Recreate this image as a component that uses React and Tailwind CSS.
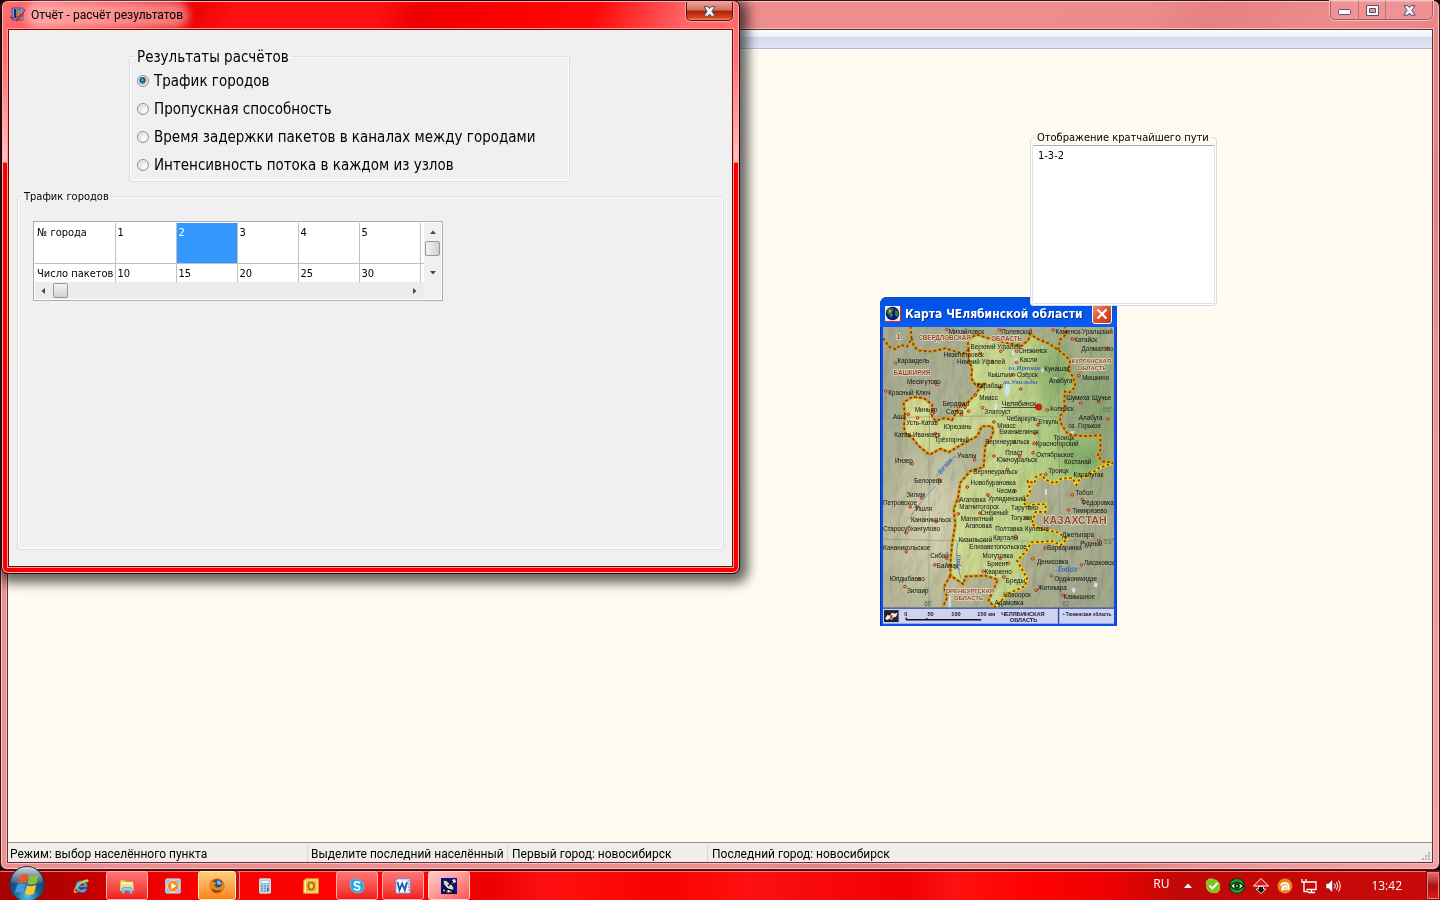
import React from 'react';
import clsx from 'clsx';

const REPORTS = [
  'Трафик городов',
  'Пропускная способность',
  'Время задержки пакетов в каналах между городами',
  'Интенсивность потока в каждом из узлов',
];

const CITIES = [
  { id: '1', packets: '10' },
  { id: '2', packets: '15' },
  { id: '3', packets: '20' },
  { id: '4', packets: '25' },
  { id: '5', packets: '30' },
];

// [x, y, name] in map units, text starts at the point
const TOWNS = [
  [240, 131, 'Михайловск'], [398, 131, 'Полевской'], [562, 131, 'Каменск-Уральский'],
  [618, 157, 'Катайск'], [640, 184, 'Долматово'], [86, 220, 'Караидель'],
  [225, 200, 'Нязепетровск'], [265, 222, 'Нижний Уфалей'], [306, 176, 'Верхний Уфалей'],
  [450, 190, 'Снежинск'], [454, 216, 'Касли'], [528, 245, 'Кунашак'],
  [358, 261, 'Кыштым'], [446, 262, 'Озёрск'], [542, 280, 'Алабуга'],
  [324, 294, 'Карабаш'], [114, 283, 'Месягутово'], [58, 316, 'Красный Ключ'],
  [332, 332, 'Миасс'], [222, 350, 'Бердяуш'], [232, 374, 'Сатка'],
  [138, 368, 'Миньяр'], [72, 388, 'Аша'], [112, 406, 'Усть-Катав'],
  [225, 419, 'Юрюзань'], [76, 442, 'Катав-Ивановск'], [198, 458, 'Трёхгорный'],
  [348, 372, 'Златоуст'], [546, 364, 'Копейск'], [414, 394, 'Чебаркуль'],
  [386, 414, 'Миасс'], [392, 434, 'Еманжелинск'], [510, 402, 'Еткуль'],
  [556, 450, 'Троицк'], [502, 470, 'Красногорский'], [350, 464, 'Верхнеуральск'],
  [594, 332, 'Шумиха'], [672, 332, 'Щучье'], [642, 272, 'Мишкино'],
  [632, 392, 'Алабуга'], [600, 416, 'оз. Горькое'], [266, 506, 'Учалы'],
  [410, 497, 'Пласт'], [504, 502, 'Октябрьское'], [384, 519, 'Южноуральск'],
  [78, 520, 'Инзер'], [588, 524, 'Костанай'], [540, 550, 'Троицк'],
  [616, 564, 'Карабутак'], [314, 553, 'Верхнеуральск'], [136, 582, 'Белорецк'],
  [306, 588, 'Новобурановка'], [384, 610, 'Чесма'], [358, 634, 'Урлядинский'],
  [622, 616, 'Тобол'], [640, 646, 'Фёдоровка'], [612, 672, 'Тимирязево'],
  [112, 622, 'Зилим'], [42, 646, 'Петровское'], [140, 666, 'Ишля'],
  [272, 638, 'Агаповка'], [272, 658, 'Магнитогорск'], [336, 678, 'Снежный'],
  [428, 662, 'Тарутино'], [426, 692, 'Тогузак'], [276, 697, 'Магнитный'],
  [126, 698, 'Кананикольск'], [42, 726, 'Старосубхангулово'], [290, 717, 'Агаповка'],
  [380, 726, 'Полтавка'], [470, 726, 'Кулевчи'], [582, 744, 'Джетыгара'],
  [636, 772, 'Рудный'], [270, 758, 'Кизильский'], [374, 752, 'Карталы'],
  [302, 780, 'Елизаветопольское'], [42, 782, 'Кананикольское'], [536, 782, 'Варваринка'],
  [342, 806, 'Могутовка'], [356, 832, 'Бриент'], [348, 854, 'Кваркено'],
  [184, 808, 'Сибай'], [204, 838, 'Баймак'], [506, 824, 'Денисовка'],
  [648, 828, 'Лисаковск'], [412, 882, 'Бреды'], [558, 876, 'Орджоникидзе'],
  [62, 876, 'Юлдыбаево'], [114, 912, 'Зилаир'], [508, 904, 'Житикара'],
  [404, 926, 'Новоорск'], [586, 932, 'Камышное'], [378, 949, 'Адамовка'],
];

const DOTS = [
  [235, 118], [393, 120], [555, 120], [612, 147], [716, 175], [80, 220], [335, 190],
  [397, 184], [444, 184], [372, 215], [444, 218], [436, 255], [204, 284], [50, 304],
  [394, 294], [320, 316], [457, 298], [289, 353], [300, 365], [146, 385], [190, 372],
  [278, 375], [118, 374], [342, 354], [537, 361], [376, 397], [509, 406], [500, 431],
  [200, 432], [437, 458], [497, 462], [720, 388], [638, 340], [692, 336], [632, 258],
  [376, 500], [454, 500], [494, 490], [318, 511], [130, 523], [211, 572], [158, 626],
  [124, 653], [143, 653], [202, 697], [112, 731], [112, 788], [234, 808], [198, 828],
  [296, 593], [358, 617], [417, 540], [440, 605], [532, 555], [612, 617], [642, 630],
  [601, 662], [269, 674], [334, 672], [474, 687], [442, 742], [692, 755], [530, 777],
  [395, 808], [420, 823], [344, 847], [493, 809], [640, 828], [406, 864], [550, 861],
  [503, 904], [583, 919], [150, 871], [108, 893], [270, 634],
];

const REGION =
  'M300 180L298 160L308 142L325 134L360 145L395 155L430 162L460 168L480 150L485 132L510 148L540 160L570 180L595 200L606 215L600 240L615 262L622 290L605 308L590 305L588 335L590 360L574 382L580 405L600 435L650 440L697 437L697 480L688 500L705 516L735 520L690 537L660 560L640 560L625 587L612 566L580 568L560 582L530 570L520 555L503 562L498 582L478 575L486 605L465 640L478 652L500 645L532 645L532 668L502 668L490 705L522 722L570 730L596 750L578 768L550 756L490 760L470 790L446 815L460 840L476 868L470 892L420 914L400 934L378 955L360 935L374 905L388 872L350 860L290 863L284 886L245 860L245 825L250 765L260 705L255 660L268 625L275 580L305 545L345 533L350 470L365 450L375 425L370 410L340 410L326 440L280 465L240 488L215 478L182 496L150 470L130 445L108 430L105 410L108 375L104 338L130 322L165 325L190 345L190 380L200 394L230 385L250 392L262 368L275 348L296 340L318 316L330 300L348 282L320 285L308 265L310 235L300 210Z';

const BORDERS = [
  'M42 145L60 170L80 178L95 165L115 170L128 145L125 111',
  'M128 145L135 170L150 182L190 185L230 175L260 185L285 190L300 180',
  'M570 180L575 150L595 132L590 111',
  'M245 860L225 895L236 925L222 955',
];

const GOLD =
  'M735 520L690 537L660 560L640 560L625 587L612 566L580 568L560 582L530 570L520 555L503 562L498 582L478 575L486 605L465 640L478 652L500 645L532 645L532 668L502 668L490 705L522 722L570 730L596 750L578 768L550 756L490 760L470 790L446 815L460 840L476 868L470 892L420 914L400 934L378 955';

function RegionMap() {
  return (
    <svg viewBox="42 111 696 894" className="block w-full" role="img" aria-label="Карта Челябинской области">
      <defs>
        <linearGradient id="land" x1="0" x2="1" y1="0" y2="1">
          <stop offset="0" stopColor="#a6ac90" />
          <stop offset="0.5" stopColor="#b9bb99" />
          <stop offset="1" stopColor="#a2a98a" />
        </linearGradient>
        <linearGradient id="region" x1="0" x2="1">
          <stop offset="0" stopColor="#dbe098" />
          <stop offset="0.5" stopColor="#c8da90" />
          <stop offset="0.8" stopColor="#a8c97e" />
          <stop offset="1" stopColor="#98bd76" />
        </linearGradient>
        <radialGradient id="woods">
          <stop offset="0" stopColor="#6e9a5c" stopOpacity="0.6" />
          <stop offset="1" stopColor="#6e9a5c" stopOpacity="0" />
        </radialGradient>
        <radialGradient id="hills">
          <stop offset="0" stopColor="#dedcb8" stopOpacity="0.9" />
          <stop offset="1" stopColor="#dedcb8" stopOpacity="0" />
        </radialGradient>
        <filter id="relief" x="0" y="0" width="1" height="1">
          <feTurbulence type="fractalNoise" baseFrequency="0.022 0.012" numOctaves="4" seed="7" />
          <feDiffuseLighting surfaceScale="11" lightingColor="#fff">
            <feDistantLight azimuth="215" elevation="50" />
          </feDiffuseLighting>
        </filter>
      </defs>

      <rect x="42" y="111" width="696" height="850" fill="url(#land)" />
      <ellipse cx="690" cy="350" rx="180" ry="330" fill="url(#woods)" />
      <ellipse cx="190" cy="700" rx="170" ry="300" fill="url(#hills)" />
      <path d={REGION} fill="url(#region)" />
      <ellipse cx="560" cy="250" rx="80" ry="170" fill="url(#woods)" />
      <ellipse cx="640" cy="500" rx="90" ry="70" fill="url(#woods)" />
      <rect x="42" y="111" width="696" height="850" filter="url(#relief)" className="opacity-30 mix-blend-multiply" />

      <g fill="none" stroke="#8f9386" strokeWidth="2">
        <path d="M42 385Q400 372 738 388M42 750Q400 762 738 752M182 270L180 955M570 111L576 955" />
      </g>
      <g fill="none" stroke="#6f8fc4" strokeWidth="3">
        <path d="M205 560Q225 520 262 500M120 690Q150 640 200 590M268 760Q258 800 272 850L278 870M540 855Q580 830 640 838" />
      </g>
      <g fill="#cfe0f0">
        <path d="M432 180l8 4-3 14-8-3zM438 205l9 2 2 16-10 3zM430 228l10 4-6 12-8-4zM412 282l14 4-2 20-9 16-8-12zM380 340l8 4-4 20-7-4zM520 235l8 4-3 10-6-3zM556 262l12 3-6 8zM518 168l8 2-3 8zM400 350l8-6 3 12-8 6zM608 424l12 2-4 8-9-2zM530 598l7 2-1 10-7-2zM530 608l6 1-1 8-6-2zM680 880l10 4-4 12-10-3zM610 900l10-3 2 12-8 3zM240 920l6 0 0 40-6 0z" />
      </g>

      <path d={REGION} fill="none" stroke="#e39a22" strokeWidth="9" strokeLinejoin="round" />
      {BORDERS.map((d) => (
        <path key={d} d={d} fill="none" stroke="#e39a22" strokeWidth="8" />
      ))}
      <path d={GOLD} fill="none" stroke="#f2d326" strokeWidth="9" strokeLinejoin="round" />
      <g fill="none" stroke="#6a4512" strokeWidth="5" strokeDasharray="8 7">
        <path d={REGION} />
        {BORDERS.map((d) => (
          <path key={d} d={d} />
        ))}
      </g>

      <g fill="#f0b24a" stroke="#b02a12" strokeWidth="3">
        {DOTS.map(([x, y]) => (
          <circle key={`${x}-${y}`} cx={x} cy={y} r="4" />
        ))}
      </g>
      <circle cx="511" cy="352" r="11" fill="#c22315" stroke="#f4c04a" strokeWidth="2" strokeDasharray="3 3" />

      <g className="font-['Liberation_Sans']" fontSize="19" fill="#111">
        {TOWNS.map(([x, y, name]) => (
          <text key={`${x}-${y}`} x={x} y={y}>{name}</text>
        ))}
        <text x="400" y="349" fontSize="21" className="underline">Челябинск</text>
      </g>
      <g className="font-['Liberation_Sans'] font-bold" fill="#8c4a34" stroke="#e6dcc0" strokeWidth="4" paintOrder="stroke">
        <text x="82" y="148" fontSize="24">1</text>
        <text x="148" y="151" fontSize="19">СВЕРДЛОВСКАЯ</text>
        <text x="368" y="153" fontSize="19">ОБЛАСТЬ</text>
        <text x="74" y="256" fontSize="19">БАШКИРИЯ</text>
        <text x="610" y="220" fontSize="18">КУРГАНСКАЯ</text>
        <text x="628" y="240" fontSize="18">ОБЛАСТЬ</text>
        <text x="524" y="704" fontSize="32">КАЗАХСТАН</text>
        <text x="230" y="914" fontSize="18">ОРЕНБУРГСКАЯ</text>
        <text x="256" y="935" fontSize="18">ОБЛАСТЬ</text>
      </g>
      <g className="font-['Liberation_Serif'] italic font-bold" fill="#3f68b0">
        <text x="420" y="242" fontSize="21">оз.Иртяш</text>
        <text x="404" y="283" fontSize="21">оз.Увильды</text>
        <text x="566" y="849" fontSize="24">Тобол</text>
        <text x="216" y="556" fontSize="22" transform="rotate(-50 216 556)">Белая</text>
        <text x="272" y="845" fontSize="22" transform="rotate(-85 272 845)">Урал</text>
      </g>
      <g className="font-['Liberation_Sans']" fontSize="20" fill="#5c6353">
        <text x="704" y="368">55°</text>
        <text x="708" y="766">53°</text>
        <text x="166" y="953">60</text>
        <text x="582" y="953">62</text>
      </g>

      <rect x="42" y="957" width="696" height="48" fill="#cdd3f0" />
      <path d="M42 958H738M571 958V1005" stroke="#33478f" strokeWidth="4" />
      <rect x="45" y="964" width="44" height="36" fill="#23222b" />
      <path d="M48 990l8-12 7 3 6-9 9 3 8-4-4 12-9 3-4 8-8-4-5 4z" fill="#f4f1ec" />
      <path d="M62 988l4-10 6 2-3 12z" fill="#d23325" />
      <path d="M112 993H338M112 986V994M174 988V994" stroke="#111" strokeWidth="4" />
      <g className="font-['Liberation_Sans'] font-bold" fontSize="17" fill="#16182c">
        <text x="106" y="983">0</text>
        <text x="176" y="983">50</text>
        <text x="248" y="983">100</text>
        <text x="326" y="983">150 км</text>
        <text x="398" y="981">ЧЕЛЯБИНСКАЯ</text>
        <text x="424" y="999">ОБЛАСТЬ</text>
        <text x="584" y="983" fontSize="14">• Тюменская область</text>
      </g>
    </svg>
  );
}

function CloseGlyph({ className }) {
  return (
    <svg viewBox="0 0 13 11" className={clsx('h-[11px] w-[13px]', className)} aria-hidden="true">
      <path
        d="M1 .7h4L6.500 2.600 8 .7h4L8.900 5.300l3.300 4.900H8L6.500 8 5 10.200H.8l3.300-4.900z"
        fill="#f6f6f6"
        stroke="#4c5168"
        strokeWidth="1"
      />
    </svg>
  );
}

function MainTitleBar() {
  return (
    <header className="flex h-[28px] shrink-0 justify-end">
      <div className="flex h-[19px] overflow-hidden rounded-b-[5px] border border-t-0 border-[#a35c60] bg-[#f09a9d]/60 shadow-[0_0_0_1px_#f8c0c0]">
        <button type="button" aria-label="Свернуть" className="flex w-[28px] items-center justify-center border-r border-[#b96f73]">
          <svg viewBox="0 0 13 6" className="mt-1 h-[6px] w-[13px]" aria-hidden="true">
            <rect x=".5" y=".5" width="12" height="5" rx="1" fill="#fafafa" stroke="#5b5368" />
          </svg>
        </button>
        <button type="button" aria-label="Развернуть" className="flex w-[27px] items-center justify-center border-r border-[#b96f73]">
          <svg viewBox="0 0 13 11" className="h-[11px] w-[13px]" aria-hidden="true">
            <path d="M.5 .5h12v10H.5zM3.500 3.500v4h6v-4z" fill="#fafafa" fillRule="evenodd" stroke="#5b5368" />
          </svg>
        </button>
        <button type="button" aria-label="Закрыть" className="flex w-[46px] items-center justify-center">
          <CloseGlyph />
        </button>
      </div>
    </header>
  );
}

function GroupBox({ title, className, legendClass, children }) {
  return (
    <fieldset className={clsx('min-w-0 rounded-[3px] border border-[#d5dfe5] shadow-[inset_0_0_0_1px_#fff]', className)}>
      <legend className={legendClass}>{title}</legend>
      {children}
    </fieldset>
  );
}

function ShortestPath() {
  return (
    <div className="absolute top-[80px] left-[1022px] w-[187px]">
      <fieldset className="rounded-[4px] border border-[#d3dde6] bg-[#fffbf0] shadow-[inset_0_0_0_1px_#fff]">
        <legend className="ml-[4px] bg-[#fffbf0] px-[2px] pt-[2px] text-[11px] leading-[14px]">
          <label htmlFor="path">Отображение кратчайшего пути</label>
        </legend>
        <textarea
          id="path"
          readOnly
          defaultValue="1-3-2"
          className="mx-px mb-px block h-[159px] w-[183px] resize-none rounded-[2px] border border-[#e2e3ea] border-t-[#abadb3] bg-white px-[5px] py-[3px] text-[11px] leading-[14px] outline-none"
        />
      </fieldset>
    </div>
  );
}

function MapWindow() {
  return (
    <section className="absolute top-[248px] left-[872px] w-[237px] rounded-t-[7px] bg-[#0a4fe6] px-[3px] pb-[2px] shadow-[inset_1px_0_0_#0a2fb4,inset_-1px_0_0_#0a3bd0]">
      <header className="-mx-[3px] flex h-[30px] items-center gap-[4px] rounded-t-[7px] bg-linear-to-b from-[#0a50d8] via-[#0054e9] via-30% to-[#0a5cf5] px-[5px] pt-[4px]">
        <svg viewBox="0 0 16 16" className="h-[16px] w-[16px]" aria-hidden="true">
          <rect width="16" height="16" fill="#f4e9e2" />
          <path d="M0 15.500h16M15.500 0v16" stroke="#e02a1c" />
          <circle cx="7.500" cy="7.500" r="6.800" fill="#0b1a78" />
          <path d="M3 3l4-1 2 2-2 2 1 3-2 3-2-3-2-2zM10 4l3 1 1 3-2 3-2-2z" fill="#3c7a3a" />
          <path d="M4 4l2 0 0 2-2 1z" fill="#b9b04a" />
        </svg>
        <h2 className="flex-1 text-[12px] leading-[16px] font-bold whitespace-nowrap text-white [text-shadow:1px_1px_0_#0a2a86]">
          Карта ЧЕлябинской области
        </h2>
        <button
          type="button"
          aria-label="Закрыть карту"
          className="flex h-[20px] w-[20px] items-center justify-center rounded-[3px] border border-white bg-linear-to-br from-[#f0906f] via-[#e0502c] to-[#c23a14]"
        >
          <svg viewBox="0 0 12 12" className="h-[12px] w-[12px]" aria-hidden="true">
            <path d="M1.500 1.500l9 9M10.500 1.500l-9 9" stroke="#fff" strokeWidth="2.200" />
          </svg>
        </button>
      </header>
      <RegionMap />
    </section>
  );
}

function ResultChoice() {
  return (
    <GroupBox
      title="Результаты расчётов"
      className="ml-[112px] h-[137px] w-[441px] text-[15px]"
      legendClass="ml-[5px] px-[2px] pt-[2px] leading-[20px]"
    >
      <div className="flex flex-col gap-[8px] pt-[4px] pl-[7px]">
        {REPORTS.map((name, idx) => (
          <label key={name} className="flex items-center gap-[5px] leading-[20px] whitespace-nowrap">
            <input
              type="radio"
              name="report"
              defaultChecked={idx === 0}
              className="h-[12px] w-[12px] appearance-none rounded-full border border-[#8e8f8f] bg-radial-[at_65%_65%] from-white to-[#c9ced3] shadow-[inset_0_0_0_1px_#f4f4f4] checked:bg-radial-[at_45%_40%] checked:from-[#7fd0ee] checked:from-0% checked:via-[#0f4a75] checked:via-25% checked:to-[#e4eaee] checked:to-60%"
            />
            {name}
          </label>
        ))}
      </div>
    </GroupBox>
  );
}

function Arrow({ dir, className }) {
  const paths = {
    up: 'M1 6L4 2.500L7 6Z',
    down: 'M1 2L4 5.500L7 2Z',
    left: 'M6 1L2.500 4L6 7Z',
    right: 'M2 1L5.500 4L2 7Z',
  };
  return (
    <svg viewBox="0 0 8 8" className={clsx('h-[8px] w-[8px]', className)} aria-hidden="true">
      <path d={paths[dir]} fill="#44474c" />
    </svg>
  );
}

function TrafficTable() {
  return (
    <div className="grid h-[80px] w-[410px] grid-cols-[1fr_17px] grid-rows-[1fr_17px] border border-[#abadb3] bg-white p-px">
      <div className="overflow-hidden">
        <table className="w-[447px] table-fixed border-collapse text-left text-[11px] leading-[14px]">
          <colgroup>
            <col className="w-[80px]" />
            <col className="w-[61px]" />
            <col className="w-[61px]" />
            <col className="w-[61px]" />
            <col className="w-[61px]" />
            <col className="w-[61px]" />
            <col className="w-[62px]" />
          </colgroup>
          <tbody>
            <tr className="h-[40px] align-top">
              <th scope="row" className="border-r border-b border-[#c0c0c0] pt-[3px] pl-[2px] font-normal whitespace-nowrap">№ города</th>
              {CITIES.map((city) => (
                <td
                  key={city.id}
                  className={clsx(
                    'border-r border-b border-[#c0c0c0] pt-[3px] pl-[2px]',
                    city.id === '2' && 'bg-[#3399ff] text-white',
                  )}
                >
                  {city.id}
                </td>
              ))}
              <td className="border-b border-[#c0c0c0]" />
            </tr>
            <tr className="h-[40px] align-top">
              <th scope="row" className="border-r border-[#c0c0c0] pt-[3px] pl-[2px] font-normal whitespace-nowrap">Число пакетов</th>
              {CITIES.map((city) => (
                <td key={city.id} className="border-r border-[#c0c0c0] pt-[3px] pl-[2px]">{city.packets}</td>
              ))}
              <td />
            </tr>
          </tbody>
        </table>
      </div>
      <div className="flex flex-col items-center bg-[#f0f0f0]">
        <Arrow dir="up" className="mt-[5px]" />
        <span className="mt-[5px] h-[15px] w-[15px] rounded-[2px] border border-[#979797] bg-linear-to-r from-[#f4f4f4] to-[#cfd0d3]" />
        <Arrow dir="down" className="mt-auto mb-[5px]" />
      </div>
      <div className="flex items-center bg-[#ececec]">
        <Arrow dir="left" className="ml-[4px]" />
        <span className="ml-[6px] h-[15px] w-[15px] rounded-[2px] border border-[#979797] bg-linear-to-b from-[#f4f4f4] to-[#cfd0d3]" />
        <Arrow dir="right" className="mr-[5px] ml-auto" />
      </div>
      <div className="bg-[#f0f0f0]" />
    </div>
  );
}

function ReportWindow() {
  return (
    <section className="absolute top-0 left-[1px] flex h-[574px] w-[739px] flex-col rounded-[7px] border border-[#2c0006] bg-[#ff0a0a] bg-[linear-gradient(#ff6a6a,#ff7070_60px,#ffc4c4_161px,#ff0000_162px,#f80000)] px-[6px] pb-[6px] shadow-[3px_4px_12px_5px_rgba(0,0,0,0.6),inset_0_0_0_1px_#ffb4b4]">
      <header className="-mx-[5px] mt-px flex h-[27px] shrink-0 items-start justify-between rounded-t-[6px] bg-[linear-gradient(110deg,#ff7070_0,#fb3a3a_14%,#e80000_25%,#ff0f0f_31%,#ff1010_51%,#ee0000_56%,#ff0000_70%,#ff0808_80%,#ff6a6a_93%)] pr-[5px] pl-[7px]">
        <div className="flex items-center gap-[5px] pt-[5px]">
          <svg viewBox="0 0 16 16" className="h-[16px] w-[16px]" aria-hidden="true">
            <path d="M2 1h11v12H2z" fill="#7f9dee" stroke="#27408f" strokeWidth=".8" />
            <path d="M4 2h2v9H4z" fill="#1e2c5c" />
            <path d="M7 3l3-1v10l-3 1z" fill="#c99b3b" stroke="#4a3410" strokeWidth=".6" />
            <path d="M0 10c5 3 12-1 15.500-8M15 2l-3 7-6 5" fill="none" stroke="#b31530" strokeWidth="1.100" />
          </svg>
          <h1 className="rounded-full bg-white/45 font-['Roboto'] text-[12px] leading-[16px] whitespace-nowrap shadow-[0_0_8px_6px_rgba(255,255,255,0.45)]">
            Отчёт - расчёт результатов
          </h1>
        </div>
        <button
          type="button"
          aria-label="Закрыть отчёт"
          className="flex h-[19px] w-[47px] items-center justify-center rounded-b-[5px] border border-t-0 border-[#57120c] bg-[linear-gradient(#e9a596,#d0705c_45%,#b01d08_50%,#d4421c_85%,#f08a5c)] shadow-[0_0_0_1px_#ff9d9d]"
        >
          <CloseGlyph />
        </button>
      </header>
      <div className="flex flex-1 flex-col border border-[#7c0000] bg-[#f0f0f0] px-[8px] pt-[15px] pb-[16px] shadow-[0_0_0_1px_#ff9a9a]">
        <ResultChoice />
        <GroupBox
          title="Трафик городов"
          className="mt-[6px] flex-1"
          legendClass="ml-[4px] px-[2px] pt-[2px] text-[11px] leading-[14px]"
        >
          <div className="pt-[17px] pl-[15px]">
            <TrafficTable />
          </div>
        </GroupBox>
      </div>
    </section>
  );
}

function StatusBar() {
  return (
    <footer className="flex h-[20px] shrink-0 items-center border-t border-[#8f8f8f] bg-[#f0eded] pt-[2px] font-['Roboto'] text-[12px] leading-[16px] whitespace-nowrap">
      <span className="w-[300px] shrink-0 overflow-hidden border-r border-[#d9d6d6] pl-[2px]">Режим: выбор населённого пункта</span>
      <span className="w-[200px] shrink-0 overflow-hidden border-r border-[#d9d6d6] pl-[3px]">Выделите последний населённый г</span>
      <span className="w-[200px] shrink-0 overflow-hidden border-r border-[#d9d6d6] pl-[4px]">Первый город: новосибирск</span>
      <span className="flex-1 pl-[4px]">Последний город: новосибирск</span>
      <svg viewBox="0 0 10 10" className="mt-[4px] mr-px h-[10px] w-[10px]" aria-hidden="true">
        <path d="M7 1h2v2H7zM4 4h2v2H4zM7 4h2v2H7zM1 7h2v2H1zM4 7h2v2H4zM7 7h2v2H7z" fill="#b9b5b5" />
      </svg>
    </footer>
  );
}

function MainWindow() {
  return (
    <section className="flex min-h-0 flex-1 flex-col rounded-[7px] border border-[#3a1518] bg-[#ea8486] bg-[linear-gradient(115deg,#ee8f90_0,#ee8c8d_62%,#e58083_66%,#ee8c8c_73%,#ea8487_80%,#e67e82_83%,#ee9193_87%,#f3a2a4)] px-[6px] pb-[6px] shadow-[inset_0_0_0_1px_#f9c9c9]">
      <MainTitleBar />
      <div className="flex min-h-0 flex-1 flex-col border border-[#5f3034] shadow-[0_0_0_1px_#f6bcbc]">
        <div className="h-[19px] shrink-0 border-b border-[#b6bcd0] bg-[linear-gradient(#fff,#eef1f8_36%,#d5dbed_40%,#e0e6f5)]" />
        <main className="relative min-h-0 flex-1 bg-[#fffbf0]">
          <MapWindow />
          <ShortestPath />
        </main>
        <StatusBar />
      </div>
    </section>
  );
}

function StartOrb() {
  return (
    <svg viewBox="0 0 38 36" className="h-[36px] w-[38px]" aria-hidden="true">
      <defs>
        <radialGradient id="orb" cx=".5" cy=".85" r=".8">
          <stop offset="0" stopColor="#4fc3ea" />
          <stop offset=".45" stopColor="#1c5c8c" />
          <stop offset="1" stopColor="#16304d" />
        </radialGradient>
        <linearGradient id="orbShine" x1="0" x2="0" y1="0" y2="1">
          <stop offset="0" stopColor="#e3ecf2" stopOpacity=".95" />
          <stop offset="1" stopColor="#a9c0d0" stopOpacity=".15" />
        </linearGradient>
      </defs>
      <circle cx="19" cy="18" r="17.500" fill="url(#orb)" stroke="#24364a" />
      <path d="M3 16a16 15 0 0 1 32 0q-16 6-32 0z" fill="url(#orbShine)" />
      <path d="M12 9.500q4.500-3 8.500-.8l-2.200 8.500q-4.200-2.200-8.800.3z" fill="#e8572a" />
      <path d="M21.800 9.500q4.200 2 9-1l-2.300 8.800q-4.500 2.700-9 .3z" fill="#8cc03a" />
      <path d="M9 19q4.500-2.700 8.700-.5L15.500 27q-4.200-2.200-8.700.5z" fill="#3f9be0" />
      <path d="M19 19.300q4.500 2.200 9.200-.5l-2.200 8.700q-4.700 2.700-9.200.3z" fill="#fbc52c" />
    </svg>
  );
}

const ICONS = {
  ie: (
    <>
      <path d="M8.500 2.500a6 6 0 1 0 5.600 8.200h-3.400a2.800 2.800 0 0 1-4.900-1.500h8.600a6 6 0 0 0-5.900-6.700zM5.900 7.200a2.700 2.700 0 0 1 5.200 0z" fill="#3fa9ee" stroke="#1560ae" strokeWidth=".5" />
      <path d="M1 14.500C-.5 10 9 1 15 1.500c1 .6.3 2.200-.3 3C14.500 2 3.500 7 1.800 13c.6 1.200 2.600.6 3.500.2-1.300 1.300-3.200 2.100-4.300 1.300z" fill="#fbd03a" stroke="#c8871a" strokeWidth=".3" />
    </>
  ),
  folder: (
    <>
      <path d="M1 2h5l1 1.500h7V13H1z" fill="#e8c766" stroke="#b58e2f" strokeWidth=".5" />
      <path d="M2 4h12v8H2z" fill="#fbf0b8" />
      <path d="M1.500 6.500h13V13h-13z" fill="#f3dc8c" />
      <path d="M3 15.500v-4q0-2 2-2h6q2 0 2 2v4h-2.500v-3h-5v3z" fill="#8ed1ee" stroke="#3a8fbd" strokeWidth=".6" />
    </>
  ),
  player: (
    <>
      <rect x=".8" y="1" width="14.400" height="14" rx="1" fill="#8fbfe4" stroke="#d9ecfa" />
      <circle cx="8" cy="8" r="5.600" fill="#f28a1a" stroke="#fde2b8" strokeWidth=".8" />
      <path d="M6.300 4.800l5 3.200-5 3.200z" fill="#fff" />
    </>
  ),
  firefox: (
    <>
      <circle cx="8" cy="8" r="7.500" fill="#c9560c" />
      <circle cx="8.500" cy="6.800" r="5" fill="#27538f" />
      <path d="M8 2.500q4 0 4.500 3.500l-2.500 1-2-1.500z" fill="#7db9e0" />
      <path d="M1.500 1.500L4 4q2.500-.5 3.500 1.500l-2 1.500q.5 3 4.500 2.500 3.500-1 3.200-6Q17.500 9 13 13q-5 4-10 0Q-1 9 1.500 1.500z" fill="#e88a18" />
      <path d="M3 10q4 5 9.500 1-1 3.500-5 3.500T3 10z" fill="#8f2f08" />
    </>
  ),
  calc: (
    <>
      <rect x="2.500" y=".8" width="11" height="14.400" rx=".8" fill="#b9d2e6" stroke="#e8f2fa" strokeWidth=".8" />
      <rect x="4" y="2.200" width="8" height="3" fill="#eff8fd" stroke="#5f8cae" strokeWidth=".4" />
      <path d="M4 7h1.800v1.500H4zM7 7h1.800v1.500H7zM10 7h1.800v1.500H10zM4 9.500h1.800V11H4zM7 9.500h1.800V11H7zM4 12h1.800v1.500H4zM7 12h1.800v1.500H7z" fill="#5f92ba" />
      <path d="M10 9.500h1.800v4H10z" fill="#3f6f98" />
    </>
  ),
  outlook: (
    <>
      <path d="M3 .8h12.200v14.400H.8V3z" fill="#fff3c4" stroke="#e0a31a" strokeWidth="1.200" />
      <rect x="3" y="2.500" width="10.500" height="11" fill="#f3b21f" />
      <ellipse cx="8.200" cy="8" rx="2.800" ry="3.600" fill="#f9d372" stroke="#a86e0c" strokeWidth="1.800" />
    </>
  ),
  skype: (
    <>
      <path d="M5 .8a4.500 4.500 0 0 1 3.500.6 6.500 6.500 0 0 1 6 8.200 4.300 4.300 0 0 1-5.600 5A6.500 6.500 0 0 1 1.600 7 4.300 4.300 0 0 1 5 .8z" fill="#21a9e8" stroke="#8fdcf8" strokeWidth=".5" />
      <path d="M11 5.300Q9.800 3.700 7.700 3.900 5.500 4.200 5.500 5.900q0 1.500 2.600 2 2.700.5 2.600 2.200-.3 1.900-2.700 1.900-2 0-3-1.700" fill="none" stroke="#fff" strokeWidth="1.700" />
    </>
  ),
  word: (
    <>
      <path d="M2.500 .8h12.700v14.400H.8V2.500z" fill="#e6effa" stroke="#5d88c6" strokeWidth=".8" />
      <path d="M12.500 3h2M12.500 6h2M12.500 9h2M12.500 12h2" stroke="#5d88c6" />
      <path d="M2 3h10.500v10.500H2z" fill="#fff" />
      <path d="M2.500 4l2 8L7.200 5.500 9.800 12l2.200-8" fill="none" stroke="#2458b0" strokeWidth="1.900" />
    </>
  ),
  dish: (
    <>
      <rect width="16" height="16" fill="#0a1186" />
      <path d="M2 2q4 0 6 3 5 2 5 7-6 1-8-3-3-2-3-7z" fill="#d8d8d8" stroke="#000" strokeWidth=".8" />
      <path d="M7 8l5-5 2 1M4 15l2-4 4 1 3 3zM1 12l4-3" stroke="#000" strokeWidth="1.200" fill="#8f8f8f" />
      <path d="M11 2l3-1 1 3-2 1zM2 11l2 1-1 2zM7 12l2 1-2 2z" fill="#f1f1f1" />
    </>
  ),
};

const TASKS = [
  { icon: 'ie', label: 'Internet Explorer' },
  { icon: 'folder', label: 'Проводник', open: true },
  { icon: 'player', label: 'Проигрыватель' },
  { icon: 'firefox', label: 'Firefox', hot: true },
  { icon: 'calc', label: 'Калькулятор' },
  { icon: 'outlook', label: 'Outlook' },
  { icon: 'skype', label: 'Skype', open: true },
  { icon: 'word', label: 'Word', open: true },
  { icon: 'dish', label: 'Отчёт', active: true },
];

function Tray() {
  return (
    <div className="ml-auto flex h-full items-center font-['Open_Sans'] text-[12px] leading-[16px] text-white">
      <span className="mr-[15px] pb-[4px]">RU</span>
      <button type="button" aria-label="Скрытые значки" className="mr-[13px]">
        <svg viewBox="0 0 8 5" className="h-[5px] w-[8px]" aria-hidden="true">
          <path d="M0 5L4 .5 8 5z" fill="#fff" />
        </svg>
      </button>
      <div className="flex items-center gap-[8px]">
        <svg viewBox="0 0 16 16" className="h-[16px] w-[16px]" aria-hidden="true">
          <path d="M5 .8a4.500 4.500 0 0 1 3.500.6 6.500 6.500 0 0 1 6 8.200 4.300 4.300 0 0 1-5.600 5A6.500 6.500 0 0 1 1.600 7 4.300 4.300 0 0 1 5 .8z" fill="#7cc51c" stroke="#c6ee78" strokeWidth=".5" />
          <path d="M4.500 7.500l3 3 5-5.500" fill="none" stroke="#fff" strokeWidth="2" />
        </svg>
        <svg viewBox="0 0 16 16" className="h-[16px] w-[16px]" aria-hidden="true">
          <circle cx="8" cy="8" r="7.500" fill="#16a22c" stroke="#06380c" />
          <path d="M1 8q7-7 14 0-7 7-14 0z" fill="#c9f7cc" stroke="#052a0a" strokeWidth="1.300" />
          <circle cx="8" cy="8" r="2.800" fill="#06240a" />
          <circle cx="8" cy="8" r="1" fill="#8ff09a" />
        </svg>
        <svg viewBox="0 0 16 16" className="h-[16px] w-[16px]" aria-hidden="true">
          <path d="M8 .5L15.500 8h-15z" fill="#e01212" stroke="#fff" />
          <path d="M5.500 8.500h5V11h2.500L8 15.500 3 11h2.500z" fill="#111" stroke="#fff" strokeWidth=".8" />
        </svg>
        <svg viewBox="0 0 16 16" className="h-[16px] w-[16px]" aria-hidden="true">
          <circle cx="8" cy="8" r="7.500" fill="#f08218" />
          <path d="M6 12.500a2.300 2.300 0 0 1 1-4h3M4 7.500a4 4 0 0 1 7.500 0v4.500" fill="none" stroke="#fff" strokeWidth="2" />
          <circle cx="8" cy="9.800" r="1.800" fill="none" stroke="#fff" strokeWidth="1.400" />
        </svg>
        <svg viewBox="0 0 16 16" className="h-[16px] w-[16px]" aria-hidden="true">
          <path d="M5.500 4h9.500v7.500H5.500M7 14.500h7M10.500 12v2" fill="none" stroke="#fff" strokeWidth="1.300" />
          <path d="M1 1v3h4V1M3 4v9.500h4" fill="none" stroke="#fff" strokeWidth="1.300" />
        </svg>
        <svg viewBox="0 0 16 16" className="h-[16px] w-[16px]" aria-hidden="true">
          <path d="M1 5.500h2.500L7.500 1.500v13L3.500 10.500H1z" fill="#fff" stroke="#5b1a1a" strokeWidth=".5" />
          <path d="M9.500 5.500q1.500 2.500 0 5M11.500 4q2.500 4 0 8M13.500 2.500q3.500 5.500 0 11" fill="none" stroke="#fff" />
        </svg>
      </div>
      <time className="mr-[24px] ml-[30px]">13:42</time>
      <button
        type="button"
        aria-label="Показать рабочий стол"
        className="h-full w-[14px] border border-[#7c0d0d] bg-linear-to-b from-[#e07070] via-[#a81010] via-50% to-[#e01818] shadow-[inset_0_0_0_1px_#e88080]"
      />
    </div>
  );
}

function Taskbar() {
  return (
    <footer className="flex h-[30px] shrink-0 items-center border-t border-[#5c0000] bg-[linear-gradient(90deg,#a80000_0,#b80000_5%,#f80000_12%,#ff0404_30%,#ee0000_34%,#ff1010_38%,#fa0000_46%,#ff1010_52%,#f00000_63%,#ff1010_66%,#ff0000_72%,#ee0000_77%,#c00808_82%,#c40808_90%,#c80a0a)] pl-[8px] shadow-[inset_0_1px_0_#ff7070]">
      <button type="button" aria-label="Пуск" className="-mt-[4px] mr-[14px]">
        <StartOrb />
      </button>
      <nav className="flex h-full gap-[4px]">
        {TASKS.map((task) => (
          <button
            key={task.icon}
            type="button"
            aria-label={task.label}
            className={clsx(
              'flex h-full items-center justify-center',
              task.hot
                ? 'mr-[4px] w-[38px] rounded-[3px] border border-[#fff0c0] bg-linear-to-b from-[#fbd07a] to-[#f88410] shadow-[3px_0_0_#c81010,4px_0_0_#ff9090]'
                : 'w-[42px]',
              task.open && 'rounded-[3px] border border-[#ffb0b0] bg-linear-to-b from-[#ff7474] to-[#f01818]',
              task.active && 'rounded-[3px] border border-[#ffd6d6] bg-linear-to-br from-[#ffd0d0] to-[#ff5050]',
            )}
          >
            <svg viewBox="0 0 16 16" className="h-[16px] w-[16px]" aria-hidden="true">
              {ICONS[task.icon]}
            </svg>
          </button>
        ))}
      </nav>
      <Tray />
    </footer>
  );
}

export default function App() {
  return (
    <div className="relative flex h-screen flex-col overflow-hidden bg-[#1a0508] font-['DejaVu_Sans_Condensed','Noto_Sans',sans-serif] text-black">
      <MainWindow />
      <ReportWindow />
      <Taskbar />
    </div>
  );
}
